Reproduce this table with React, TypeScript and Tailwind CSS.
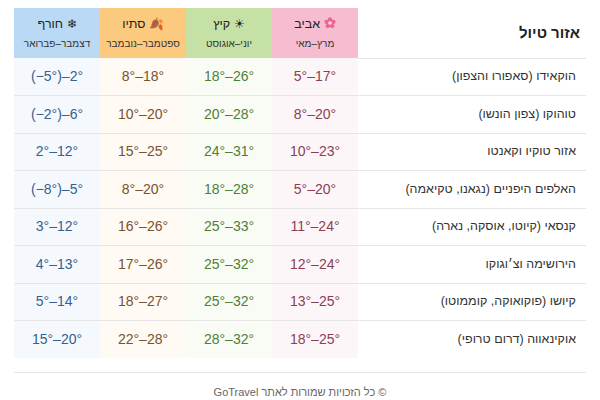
function Blossom() {
  return (
    <svg viewBox="0 0 20 20" className="inline-block w-[12px] h-[12px] align-[-1px]" aria-hidden="true">
      {[0, 72, 144, 216, 288].map((a) => (
        <ellipse key={a} cx="10" cy="5" rx="3.6" ry="4.6" fill="#f06292" transform={`rotate(${a} 10 10)`} />
      ))}
      <circle cx="10" cy="10" r="3" fill="#fce4ec" />
      <circle cx="10" cy="10" r="1.3" fill="#f8bbd0" />
    </svg>
  );
}

const seasons = [
  { key: "spring", icon: <Blossom />, name: "אביב", months: "מרץ–מאי", head: "bg-[#f6bcd0]", cell: "bg-[#fdf6f9] text-[#8a3f55]" },
  { key: "summer", icon: "☀", name: "קיץ", months: "יוני–אוגוסט", head: "bg-[#c5e1a5]", cell: "bg-[#f9fcf5] text-[#4f7f35]" },
  { key: "autumn", icon: "🍂", name: "סתיו", months: "ספטמבר–נובמבר", head: "bg-[#fbca7e]", cell: "bg-[#fffaf3] text-[#7a5230]" },
  { key: "winter", icon: "❄", name: "חורף", months: "דצמבר–פברואר", head: "bg-[#b9d9f5]", cell: "bg-[#f5f9fd] text-[#35608f]" },
];

const rows = [
  { region: "הוקאידו (סאפורו והצפון)", temps: ["5°–17°", "18°–26°", "8°–18°", "(−5°)–2°"] },
  { region: "טוהוקו (צפון הונשו)", temps: ["8°–20°", "20°–28°", "10°–20°", "(−2°)–6°"] },
  { region: "אזור טוקיו וקאנטו", temps: ["10°–23°", "24°–31°", "15°–25°", "2°–12°"] },
  { region: "האלפים היפניים (נגאנו, טקיאמה)", temps: ["5°–20°", "18°–28°", "8°–20°", "(−8°)–5°"] },
  { region: "קנסאי (קיוטו, אוסקה, נארה)", temps: ["11°–24°", "25°–33°", "16°–26°", "3°–12°"] },
  { region: "הירושימה וצ׳וגוקו", temps: ["12°–24°", "25°–32°", "17°–26°", "4°–13°"] },
  { region: "קיושו (פוקואוקה, קוממוטו)", temps: ["13°–25°", "25°–32°", "18°–27°", "5°–14°"] },
  { region: "אוקינאווה (דרום טרופי)", temps: ["18°–25°", "28°–32°", "22°–28°", "15°–20°"] },
];

export default function App() {
  return (
    <div dir="rtl" className="w-[600px] h-[400px] bg-white px-[14px] pt-[8px] font-['Liberation_Sans',Arial,sans-serif] text-[#333]">
      <table className="w-full border-collapse table-fixed">
        <colgroup>
          <col className="w-[228px]" />
          <col className="w-[86px]" />
          <col className="w-[86px]" />
          <col className="w-[86px]" />
          <col className="w-[86px]" />
        </colgroup>
        <thead>
          <tr className="h-[50px]">
            <th className="text-right pr-[6px] text-[15px] font-bold text-[#222] border-b border-[#e3e3e3]">אזור טיול</th>
            {seasons.map((s) => (
              <th key={s.key} className={`${s.head} text-center font-normal align-middle`}>
                <div className="text-[12.5px] leading-[16px] text-[#222]">
                  <span className="text-[12px]">{s.icon}</span> {s.name}
                </div>
                <div className="text-[10px] leading-[13px] mt-[5px] text-[#333]">{s.months}</div>
              </th>
            ))}
          </tr>
        </thead>
        <tbody>
          {rows.map((r, i) => (
            <tr key={r.region} className={`h-[37.5px] ${i < rows.length - 1 ? "border-b border-[#e6e6e6]" : ""}`}>
              <td className="text-right pr-[10px] text-[12.5px] text-[#333]">{r.region}</td>
              {r.temps.map((t, j) => (
                <td key={j} dir="ltr" className={`${seasons[j].cell} text-center text-[14px]`}>
                  {t}
                </td>
              ))}
            </tr>
          ))}
        </tbody>
      </table>
      <footer className="mt-[14px] border-t border-[#e6e6e6] pt-[11px] text-center text-[11px] text-[#666]">
        © כל הזכויות שמורות לאתר GoTravel
      </footer>
    </div>
  );
}
